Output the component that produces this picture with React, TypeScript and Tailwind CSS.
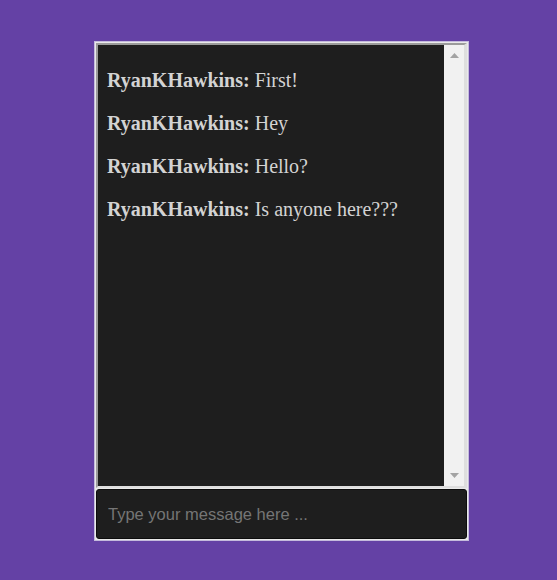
import { useState } from 'react'

const messages = [
  { user: 'RyanKHawkins', text: 'First!' },
  { user: 'RyanKHawkins', text: 'Hey' },
  { user: 'RyanKHawkins', text: 'Hello?' },
  { user: 'RyanKHawkins', text: 'Is anyone here???' },
]

function ScrollBar() {
  return (
    <div className="w-[20px] bg-[#f1f1f1] flex flex-col items-center justify-between py-[8px]">
      <svg width="9" height="5" viewBox="0 0 9 5">
        <polygon points="4.5,0 9,5 0,5" fill="#a3a3a3" />
      </svg>
      <svg width="9" height="5" viewBox="0 0 9 5">
        <polygon points="0,0 9,0 4.5,5" fill="#a3a3a3" />
      </svg>
    </div>
  )
}

export default function App() {
  const [draft, setDraft] = useState('')

  return (
    <div className="min-h-screen bg-[#6441a5] pt-[41px] pl-[94px]">
      <div className="w-[375px] h-[500px] border border-[#c4bbdc] bg-[#e9e9e9] p-[1px] flex flex-col gap-[1px]">
        <div className="h-[445px] flex border-2 border-r-[3px] border-t-[#9b9b9b] border-l-[#9b9b9b] border-r-[#dedede] border-b-[#dedede] bg-[#1e1e1e]">
          <div
            className="flex-1 pl-[9px] pt-[4px] text-[20px] leading-[23px] text-[#d3d3d3]"
            style={{ fontFamily: '"Liberation Serif", "Times New Roman", serif' }}
          >
            {messages.map((m, i) => (
              <p key={i} className="my-[20px]">
                <b>{m.user}:</b> {m.text}
              </p>
            ))}
          </div>
          <ScrollBar />
        </div>
        <input
          autoFocus
          value={draft}
          onChange={(e) => setDraft(e.target.value)}
          placeholder="Type your message here ..."
          className="h-[50px] w-full rounded-[3px] border border-[#0c0c0c] bg-[#1e1e1e] pl-[11px] text-[16.5px] text-[#d3d3d3] placeholder:text-[#757575] outline-none caret-[#d3d3d3]"
          style={{ fontFamily: '"Liberation Sans", Arial, sans-serif' }}
        />
      </div>
    </div>
  )
}
